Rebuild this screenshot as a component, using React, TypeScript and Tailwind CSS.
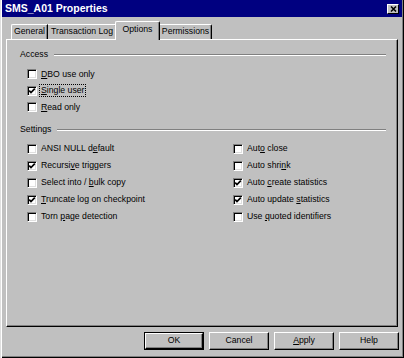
import type { ReactNode } from 'react'

function Check({ checked }: { checked?: boolean }) {
  return (
    <div className="w-[10px] h-[10px] shrink-0 bg-white border border-t-[#808080] border-l-[#808080] border-r-white border-b-white shadow-[inset_1px_1px_0_#000,inset_-1px_-1px_0_#dfdfdf] flex items-center justify-center">
      {checked && (
        <svg width="8" height="8" viewBox="0 0 8 8">
          <path d="M1.2 3.6 L3 5.6 L6.8 1.6" stroke="#000" strokeWidth="1.7" fill="none" />
        </svg>
      )}
    </div>
  )
}

function Row({ checked, children, focus }: { checked?: boolean; children: ReactNode; focus?: boolean }) {
  return (
    <div className="flex items-center gap-[4px] h-[17px]">
      <Check checked={checked} />
      <span className={focus ? 'outline outline-1 outline-dotted outline-black px-[1px] -ml-[1px] leading-[11px]' : ''}>{children}</span>
    </div>
  )
}

function U({ children }: { children: ReactNode }) {
  return <span className="underline underline-offset-[1px]">{children}</span>
}

function GroupHeader({ label }: { label: string }) {
  return (
    <div className="flex items-center h-[12px] pl-[13px] pr-[11px]">
      <span>{label}</span>
      <div className="flex-1 ml-[6px] border-t border-t-[#808080] border-b border-b-white" />
    </div>
  )
}

function Button({ children, isDefault }: { children: ReactNode; isDefault?: boolean }) {
  return (
    <div className={isDefault ? 'w-[60px] h-[18px] border border-black' : 'w-[60px] h-[18px]'}>
      <div className="w-full h-full flex items-center justify-center border border-t-white border-l-white border-r-black border-b-black shadow-[inset_-1px_-1px_0_#808080]">
        {children}
      </div>
    </div>
  )
}

export default function App() {
  return (
    <div className="w-[404px] h-[358px] bg-[#c0c0c0] flex flex-col px-[2px] pb-[2px] text-[8.7px] text-black font-['Liberation_Sans',Arial,sans-serif] shadow-[inset_1px_0_0_#dfdfdf,inset_2px_0_0_#fff,inset_-1px_-1px_0_#000,inset_-2px_-2px_0_#808080]">
      {/* title bar */}
      <div className="h-[17px] bg-[#000080] flex items-center justify-between pl-[3px] pr-[3px]">
        <span className="text-white font-bold text-[10.5px]">SMS_A01 Properties</span>
        <div className="w-[12px] h-[10px] bg-[#c0c0c0] border border-t-white border-l-white border-r-black border-b-black flex items-center justify-center">
          <svg width="7" height="6" viewBox="0 0 7 6">
            <path d="M1 0.5 L6 5.5 M6 0.5 L1 5.5" stroke="#000" strokeWidth="1.5" />
          </svg>
        </div>
      </div>

      {/* tabs */}
      <div className="mt-[4px] h-[19px] pl-[9px] flex items-end relative z-10">
        <div className="w-[37px] h-[15px] mb-[1px] flex items-center justify-center border-t border-l border-white border-r border-r-black rounded-tl-[2px] shadow-[inset_-1px_0_0_#808080]">
          General
        </div>
        <div className="w-[69px] h-[15px] mb-[1px] flex items-center justify-center border-t border-t-white border-r border-r-black rounded-tr-[2px] shadow-[inset_-1px_0_0_#808080]">
          Transaction Log
        </div>
        <div className="-ml-[2px] w-[45px] h-[19px] pb-[2px] bg-[#c0c0c0] flex items-center justify-center border-t border-l border-white border-r border-r-black rounded-t-[2px] shadow-[inset_-1px_0_0_#808080]">
          Options
        </div>
        <div className="w-[52px] h-[15px] mb-[1px] flex items-center justify-center border-t border-t-white border-r border-r-black rounded-tr-[2px] shadow-[inset_-1px_0_0_#808080]">
          Permissions
        </div>
      </div>

      {/* panel */}
      <div className="-mt-[1px] mx-[4px] h-[288px] flex flex-col border border-t-white border-l-white border-r-black border-b-black shadow-[inset_-1px_-1px_0_#808080]">
        <div className="mt-[9px]">
          <GroupHeader label="Access" />
        </div>
        <div className="mt-[5px] pl-[20px] flex flex-col [&>div]:h-[16.5px]">
          <Row>
            <U>D</U>BO use only
          </Row>
          <Row checked focus>
            <U>S</U>ingle user
          </Row>
          <Row>
            <U>R</U>ead only
          </Row>
        </div>

        <div className="mt-[8.5px]">
          <GroupHeader label="Settings" />
        </div>
        <div className="mt-[4px] pl-[20px] flex">
          <div className="w-[206px] flex flex-col">
            <Row>
              ANSI NULL d<U>e</U>fault
            </Row>
            <Row checked>
              Recursi<U>v</U>e triggers
            </Row>
            <Row>
              Select into / <U>b</U>ulk copy
            </Row>
            <Row checked>
              <U>T</U>runcate log on checkpoint
            </Row>
            <Row>
              Torn <U>p</U>age detection
            </Row>
          </div>
          <div className="flex flex-col">
            <Row>
              Aut<U>o</U> close
            </Row>
            <Row>
              Auto shri<U>n</U>k
            </Row>
            <Row checked>
              Auto <U>c</U>reate statistics
            </Row>
            <Row checked>
              Auto update <U>s</U>tatistics
            </Row>
            <Row>
              Use <U>q</U>uoted identifiers
            </Row>
          </div>
        </div>
      </div>

      {/* buttons */}
      <div className="mt-[5px] mr-[3px] flex justify-end gap-[5px]">
        <Button isDefault>OK</Button>
        <Button>Cancel</Button>
        <Button>
          <span>
            <U>A</U>pply
          </span>
        </Button>
        <Button>Help</Button>
      </div>
    </div>
  )
}
